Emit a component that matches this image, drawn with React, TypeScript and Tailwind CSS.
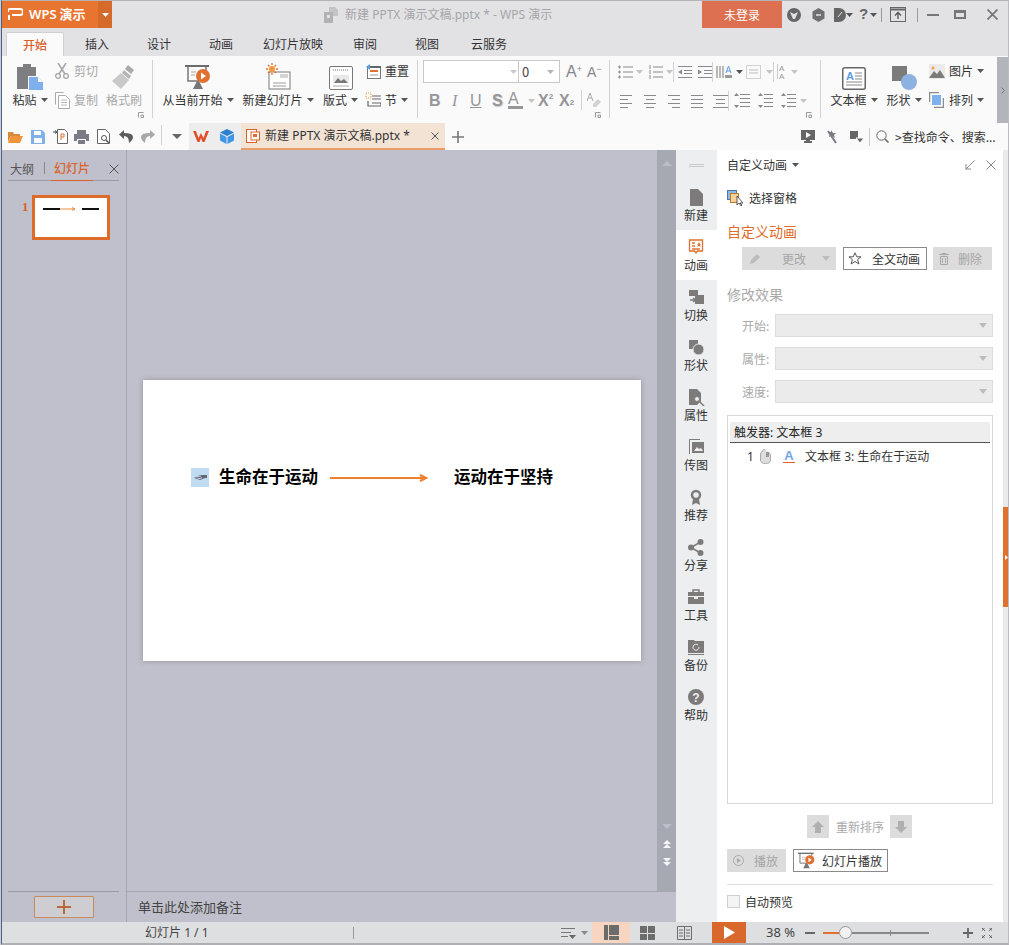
import type { ReactNode } from 'react';

const O = '#e0702f';

// latin runs: the CJK font's own latin is too narrow for this UI
function Lat({ children }: { children: ReactNode }) {
  return <span className="font-['Noto_Sans',sans-serif]">{children}</span>;
}

function Caret({ color = '#555', className = '' }: { color?: string; className?: string }) {
  return (
    <svg width="7" height="4" viewBox="0 0 7 4" className={`shrink-0 ${className}`}>
      <path d="M0 0h7L3.5 4z" fill={color} />
    </svg>
  );
}

function Sep({ h = 58, mt = 3 }: { h?: number; mt?: number }) {
  return <div className="w-px shrink-0 bg-[#d2d2d6]" style={{ height: h, marginTop: mt }} />;
}

function Launcher() {
  return (
    <svg width="6" height="6" viewBox="0 0 6 6" className="absolute bottom-[5px] right-[8px]">
      <path d="M.5 5.5V.5h5M3 3h2.5v2.5H3z" fill="none" stroke="#999" />
    </svg>
  );
}

function Big({ w, ml, label, icon, color = '#333' }: { w: number; ml: number; label: string; icon: ReactNode; color?: string }) {
  return (
    <div className="flex shrink-0 flex-col items-center" style={{ width: w, marginLeft: ml }}>
      <div className="flex h-[33px] items-end">{icon}</div>
      <div className="flex h-[20px] items-center gap-[4px] whitespace-nowrap" style={{ color }}>
        {label}
        {label !== '格式刷' && <Caret />}
      </div>
    </div>
  );
}

function Small({ icon, label, gray, caret, iw = 19, first }: { icon: ReactNode; label: string; gray?: boolean; caret?: boolean; iw?: number; first?: boolean }) {
  return (
    <div className={`flex items-center whitespace-nowrap ${first ? 'h-[28px]' : 'h-[30px]'} ${gray ? 'text-[#a9a9a9]' : 'text-[#333]'}`}>
      <div className="flex shrink-0 items-center" style={{ width: iw }}>{icon}</div>
      {label}
      {caret && <Caret className="ml-[4px]" />}
    </div>
  );
}

// horizontal rule icon used by the paragraph buttons
function Rules({ w = 14, rows, color = '#8a8a8e' }: { w?: number; rows: [number, number][]; color?: string }) {
  const step = 12 / Math.max(rows.length - 1, 1);
  return (
    <svg width={w} height="14" viewBox={`0 0 ${w} 14`} className="shrink-0">
      {rows.map(([a, b], i) => (
        <path key={i} d={`M${a} ${1.5 + i * step}H${b}`} stroke={color} />
      ))}
    </svg>
  );
}

function Bullets({ numbered }: { numbered?: boolean }) {
  return (
    <svg width="15" height="14" viewBox="0 0 15 14" className="shrink-0">
      {[2, 7, 12].map((y) =>
        numbered ? (
          <path key={y} d={`M2 ${y - 2}v4M5 ${y}h10`} stroke="#8a8a8e" />
        ) : (
          <path key={y} d={`M0 ${y}h3M1.5 ${y - 1.5}v3M5 ${y}h10`} stroke="#8a8a8e" />
        ),
      )}
    </svg>
  );
}

function Indent({ out }: { out?: boolean }) {
  return (
    <svg width="14" height="14" viewBox="0 0 14 14" className="shrink-0">
      <path d="M0 1.5h14M6 5.5h8M6 8.5h8M0 12.5h14" stroke="#8a8a8e" />
      <path d={out ? 'M4 4.5v5L0 7z' : 'M0 4.5v5L4 7z'} fill="#8a8a8e" />
    </svg>
  );
}

function Spacing({ w = 16 }: { w?: number }) {
  return (
    <svg width={w} height="15" viewBox={`0 0 ${w} 15`} className="shrink-0">
      <path d={`M6 1.5H${w}M6 5.5H${w}M6 9.5H${w}M6 13.5H${w}`} stroke="#8a8a8e" />
      <path d="M2.5 0L5 3H0zM2.5 15L0 12h5z" fill="#8a8a8e" />
    </svg>
  );
}

function Box({ w, ml = 0, children }: { w: number; ml?: number; children?: ReactNode }) {
  return (
    <div className="flex h-[29px] shrink-0 items-center" style={{ width: w, marginLeft: ml }}>
      {children}
    </div>
  );
}

function PasteIcon() {
  return (
    <svg width="26" height="27" viewBox="0 0 26 27">
      <path d="M0 4h6V1h8v3h5v9H11v13H0z" fill="#7d7d82" />
      <path d="M12 14h9l5 5v8H12z" fill="#7fb0ec" />
      <path d="M21 14l5 5h-5z" fill="#fff" />
    </svg>
  );
}

function SlideshowIcon({ s = 26 }: { s?: number }) {
  return (
    <svg width={s} height={s} viewBox="0 0 26 26">
      <path d="M0 1h24v2H0z" fill="#6b6b6b" />
      <path d="M3 3v14h10M21 3v3" fill="none" stroke="#777" strokeWidth="1.5" />
      <path d="M6 8h5M6 11h4" stroke="#aaa" />
      <path d="M8 25l4-8h2l4 8z" fill="#777" />
      <circle cx="18" cy="12" r="7" fill={O} />
      <path d="M16 8.5l5 3.5-5 3.5z" fill="#fff" />
    </svg>
  );
}

function NewSlideIcon() {
  return (
    <svg width="25" height="27" viewBox="0 0 25 27">
      <rect x="3" y="9" width="21" height="17" fill="#fff" stroke="#777" />
      <path d="M7 20h13M7 23h13" stroke="#9a9a9a" />
      <circle cx="6" cy="6" r="3" fill="#f29a3a" />
      <path d="M6 0v2M6 10v2M0 6h2M10 6h2M2 2l1.5 1.5M8.5 8.5L10 10M10 2L8.5 3.5M2 10l1.5-1.5" stroke={O} strokeWidth="1.3" />
      <path d="M14 12h8M14 14h8" stroke="#aaa" />
    </svg>
  );
}

function Clipboard() {
  return (
    <div className="relative flex w-[150px] shrink-0">
      <Big ml={8} w={40} label="粘贴" icon={<PasteIcon />} />
      <div className="ml-[5px] w-[47px] shrink-0">
        <Small
          first
          gray
          label="剪切"
          icon={
            <svg width="14" height="16" viewBox="0 0 14 16">
              <path d="M3 0l7 11M11 0L4 11" stroke="#a5a5a8" strokeWidth="1.5" />
              <circle cx="3" cy="13" r="2.3" fill="none" stroke="#a5a5a8" strokeWidth="1.3" />
              <circle cx="11" cy="13" r="2.3" fill="none" stroke="#a5a5a8" strokeWidth="1.3" />
            </svg>
          }
        />
        <Small
          gray
          label="复制"
          icon={
            <svg width="15" height="17" viewBox="0 0 15 17">
              <path d="M.5 12.5V.5h8M3.5 3.5h7l4 4v9h-11z" fill="#fff" stroke="#aaa" />
              <path d="M6 8h6M6 10.5h6M6 13h6" stroke="#bbb" />
            </svg>
          }
        />
      </div>
      <Big
        ml={0}
        w={44}
        color="#a9a9a9"
        label="格式刷"
        icon={
          <svg width="24" height="25" viewBox="0 0 24 25">
            <path d="M16 0l6 5-3 4-6-5z" fill="#aaa" />
            <path d="M12 5l7 6-2 3-7-6z" fill="#b5b5b5" />
            <path d="M9 8l8 7-8 9-9-8z" fill="#c9c9c9" />
          </svg>
        }
      />
      <Launcher />
    </div>
  );
}

function SlidesGroup() {
  return (
    <div className="flex w-[264px] shrink-0">
      <Big ml={10} w={70} label="从当前开始" icon={<SlideshowIcon />} />
      <Big ml={10} w={70} label="新建幻灯片" icon={<NewSlideIcon />} />
      <Big
        ml={10}
        w={35}
        label="版式"
        icon={
          <svg width="24" height="24" viewBox="0 0 24 24">
            <rect x=".5" y=".5" width="23" height="23" rx="1.5" fill="#fff" stroke="#777" />
            <path d="M4 4h16" stroke="#bbb" strokeDasharray="1 1" strokeWidth="2" />
            <path d="M4 9h16v8H4z" fill="#e9e9e9" />
            <path d="M5 17l4-5 3 3 3-2 4 4z" fill="#777" />
            <path d="M4 20h16" stroke="#aaa" />
          </svg>
        }
      />
      <div className="ml-[7px] w-[52px] shrink-0">
        <Small
          first
          iw={20}
          label="重置"
          icon={
            <svg width="16" height="15" viewBox="0 0 16 15">
              <rect x="2.5" y="2.5" width="13" height="12" fill="#fff" stroke="#777" />
              <path d="M2 3h14" stroke="#666" strokeWidth="2" />
              <path d="M5 7h8" stroke={O} strokeWidth="2" />
              <path d="M5 11h8" stroke="#999" />
              <path d="M5 0L1 3l4 3z" fill="#5b9de0" />
            </svg>
          }
        />
        <Small
          iw={20}
          label="节"
          caret
          icon={
            <svg width="16" height="16" viewBox="0 0 16 16">
              <path d="M1 1h5v5H1z" fill="none" stroke="#f0a040" strokeDasharray="1 1" />
              <path d="M7 4h9M7 7h9M3 9v5h13v-3H7" fill="none" stroke="#666" strokeWidth="1.2" />
            </svg>
          }
        />
      </div>
    </div>
  );
}

function FontGroup() {
  const letter = "flex h-[29px] shrink-0 items-center font-['Liberation_Sans',sans-serif] text-[16px] text-[#96969a]";
  return (
    <div className="relative w-[191px] shrink-0 pl-[5px]">
      <div className="mt-[3px] flex h-[23px] items-center">
        <div className="flex h-[23px] w-[137px] border border-[#c8c8cc] bg-white">
          <div className="flex w-[95px] items-center justify-end border-r border-[#c8c8cc] pr-[1px]">
            <Caret color="#c9c9c9" />
          </div>
          <div className="flex flex-1 items-center justify-between px-[3px] pr-[5px] text-[13px] text-[#444]">
            0<Caret color="#b5b5b5" />
          </div>
        </div>
        <span className="ml-[6px] font-['Liberation_Sans',sans-serif] text-[16px] leading-none text-[#85858a]">
          A<sup className="text-[9px]">+</sup>
        </span>
        <span className="ml-[5px] font-['Liberation_Sans',sans-serif] text-[14px] leading-none text-[#85858a]">
          A<sup className="text-[9px]">−</sup>
        </span>
      </div>
      <div className="mt-[3px] flex h-[29px]">
        <span className={`${letter} ml-[6px] w-[23px] font-bold`}>B</span>
        <span className={`${letter} w-[18px] font-['Liberation_Serif',serif] italic`}>I</span>
        <span className={`${letter} w-[22px] underline`}>U</span>
        <span className={`${letter} w-[16px] font-bold [text-shadow:1px_1px_1px_#c4c4c4]`}>S</span>
        <div className={`${letter} w-[20px] flex-col items-start justify-center leading-[14px]`}>
          <span>A</span>
          <span className="h-[3px] w-[15px] bg-[#96969a]" />
        </div>
        <Box w={10}>
          <Caret color="#c4c4c4" />
        </Box>
        <span className={`${letter} w-[21px] font-bold`}>
          X<sup className="text-[8px]">2</sup>
        </span>
        <span className={`${letter} w-[22px] font-bold`}>
          X<sub className="text-[8px]">2</sub>
        </span>
        <Sep h={20} mt={4} />
        <Box w={18} ml={5}>
          <svg width="14" height="16" viewBox="0 0 14 16">
            <path d="M3 0L0 8M3 0l3 8M1 5h4" stroke="#aaa" fill="none" />
            <path d="M6 11l5-5 3 3-5 5H6z" fill="#d2d2d2" />
          </svg>
        </Box>
      </div>
      <Launcher />
    </div>
  );
}

function ParagraphGroup() {
  const a: [number, number][] = [[0, 12], [0, 8], [0, 12], [0, 8]];
  const c: [number, number][] = [[0, 12], [2, 10], [0, 12], [2, 10]];
  const r: [number, number][] = [[0, 12], [4, 12], [0, 12], [4, 12]];
  const j: [number, number][] = [[0, 12], [0, 12], [0, 12], [0, 12]];
  return (
    <div className="relative w-[210px] shrink-0">
      <div className="flex h-[29px]">
        <Box w={25} ml={8}><Bullets /><Caret color="#c4c4c4" className="ml-[3px]" /></Box>
        <Box w={25} ml={5}><Bullets numbered /><Caret color="#c4c4c4" className="ml-[3px]" /></Box>
        <Sep h={20} mt={5} />
        <Box w={14} ml={4}><Indent out /></Box>
        <Box w={14} ml={6}><Indent /></Box>
        <Sep h={20} mt={5} />
        <Box w={27} ml={3}>
          <svg width="16" height="16" viewBox="0 0 16 16">
            <path d="M1 2v12M4 2v12M7 2v12" stroke="#777" />
            <path d="M10 9l2.5-7L15 9M11 7h3" fill="none" stroke="#5b9de0" />
            <path d="M9 11h7v3H9z" fill="#999" />
          </svg>
          <Caret className="ml-[4px]" />
        </Box>
        <Box w={27} ml={3}>
          <svg width="15" height="14" viewBox="0 0 15 14">
            <rect x=".5" y=".5" width="14" height="13" fill="none" stroke="#aaa" strokeDasharray="1 1" />
            <path d="M3 5h9M3 8h9" stroke="#bbb" />
          </svg>
          <Caret color="#c4c4c4" className="ml-[5px]" />
        </Box>
        <Sep h={20} mt={5} />
        <Box w={20} ml={3}>
          <svg width="9" height="17" viewBox="0 0 9 17" className="shrink-0">
            <path d="M0 1v15" stroke="#999" />
            <text x="2" y="8" fontSize="8" fontFamily="Liberation Sans" fill="#999">A</text>
            <text x="2" y="16" fontSize="8" fontFamily="Liberation Sans" fill="#999">A</text>
          </svg>
          <Caret color="#c4c4c4" className="ml-[5px]" />
        </Box>
      </div>
      <div className="flex h-[29px]">
        <Box w={12} ml={10}><Rules w={12} rows={a} /></Box>
        <Box w={12} ml={12}><Rules w={12} rows={c} /></Box>
        <Box w={12} ml={12}><Rules w={12} rows={r} /></Box>
        <Box w={12} ml={11}><Rules w={12} rows={j} /></Box>
        <Box w={15} ml={10}><Rules w={15} rows={[[0, 15], [3, 12], [3, 12], [0, 15]]} /></Box>
        <Sep h={20} mt={5} />
        <Box w={16} ml={5}><Spacing /></Box>
        <Box w={15} ml={8}><Spacing w={15} /></Box>
        <Box w={26} ml={8}>
          <Spacing w={15} />
          <Caret color="#c4c4c4" className="ml-[4px]" />
        </Box>
      </div>
      <Launcher />
    </div>
  );
}

function InsertGroup() {
  return (
    <div className="flex w-[176px] shrink-0 overflow-hidden">
      <Big
        ml={10}
        w={46}
        label="文本框"
        icon={
          <svg width="24" height="23" viewBox="0 0 24 23">
            <rect x=".75" y=".75" width="22.5" height="21.5" rx="2" fill="#fff" stroke="#666" strokeWidth="1.5" />
            <text x="4" y="13" fontSize="11" fontWeight="700" fontFamily="Liberation Sans" fill="#5b9de0">A</text>
            <path d="M13 6h7M13 9h7M13 12h7M4 15h16M4 18h16" stroke="#888" />
          </svg>
        }
      />
      <Big
        ml={10}
        w={34}
        label="形状"
        icon={
          <svg width="25" height="24" viewBox="0 0 25 24">
            <path d="M0 0h15v15H0z" fill="#7d7a7a" />
            <circle cx="17" cy="16" r="8" fill="#8db2e2" />
          </svg>
        }
      />
      <div className="ml-[8px] w-[68px] shrink-0">
        <Small
          first
          iw={20}
          label="图片"
          caret
          icon={
            <svg width="16" height="15" viewBox="0 0 16 15">
              <path d="M0 0h16v15H0z" fill="#eceaea" />
              <path d="M0 14l5-7 3 3 3-4 5 8z" fill="#7d7a7a" />
              <circle cx="4" cy="4" r="1.5" fill="#f0a040" />
            </svg>
          }
        />
        <Small
          iw={20}
          label="排列"
          caret
          icon={
            <svg width="15" height="16" viewBox="0 0 15 16">
              <path d="M.5 10V.5H10M5 15.5H14.5V6" fill="none" stroke="#8c8c8c" strokeWidth="1.5" />
              <path d="M3 3h9v10H3z" fill="#7fb0ec" />
            </svg>
          }
        />
      </div>
      <div className="ml-[2px] w-[8px] shrink-0 pt-[7px]">
        <div className="h-[15px] w-[7px] bg-[#c4c4c4]" />
        <div className="mt-[14px] h-[15px] w-[7px] border border-[#999]" />
      </div>
    </div>
  );
}

function Ribbon() {
  return (
    <div className="flex h-[67px] bg-[#fafafa] pt-[1px]">
      <Clipboard />
      <Sep />
      <SlidesGroup />
      <Sep />
      <FontGroup />
      <Sep />
      <ParagraphGroup />
      <Sep />
      <InsertGroup />
      <div className="flex flex-1 items-center justify-center bg-[#b3b5bd]">
        <svg width="4" height="7" viewBox="0 0 4 7"><path d="M.5.5l3 3-3 3" fill="none" stroke="#777" /></svg>
      </div>
    </div>
  );
}

function TitleBar() {
  return (
    <div className="flex h-[27px] bg-[#e2e2e5]">
      <div className="flex w-[110px] shrink-0 text-white">
        <div className="flex flex-1 items-center gap-[6px] bg-[#e8752f] pl-[6px] text-[13px] font-semibold">
          <svg width="15" height="13" viewBox="0 0 15 13">
            <path d="M0 4V2.5Q0 1 2 1h10q3 0 3 3t-3 3H4M1 12V7" fill="none" stroke="#fff" strokeWidth="2" />
          </svg>
          <span><Lat>WPS</Lat> 演示</span>
        </div>
        <div className="flex w-[14px] items-center justify-center bg-[#d66a2b]">
          <Caret color="#fff" />
        </div>
      </div>
      <div className="ml-[212px] flex w-[239px] items-center gap-[6px] whitespace-nowrap text-[#a5a5a8]">
        <svg width="14" height="16" viewBox="0 0 14 16" className="mr-[1px] shrink-0">
          <path d="M5 0h6l3 3v6H5z" fill="#c4c4c8" />
          <path d="M0 5h9v11H0z" fill="#b2b2b6" />
          <path d="M3 8h3v3H3z" fill="#e2e2e5" />
        </svg>
        <span>新建<Lat> PPTX </Lat>演示文稿<Lat>.pptx * - WPS </Lat>演示</span>
      </div>
      <div className="ml-[139px] flex w-[80px] shrink-0 items-center justify-center bg-[#dd7050] text-white">未登录</div>
      <div className="ml-[5px] flex items-center">
        <svg width="14" height="14" viewBox="0 0 14 14">
          <circle cx="7" cy="7" r="7" fill="#666" />
          <path d="M3 4l4 2 4-2-3 7H6z" fill="#e2e2e5" />
        </svg>
        <svg width="13" height="14" viewBox="0 0 13 14" className="ml-[11px]">
          <path d="M6.5 0l6 3.5v7L6.5 14l-6-3.5v-7z" fill="#707074" />
          <path d="M4 7h5" stroke="#e2e2e5" strokeWidth="1.5" />
        </svg>
        <svg width="12" height="14" viewBox="0 0 12 14" className="ml-[9px]">
          <path d="M0 0h5a7 7 0 0 1 0 14H0z" fill="#666" />
          <path d="M4 9l4-5" stroke="#e2e2e5" />
        </svg>
        <Caret />
        <span className="ml-[6px] w-[8px] font-['Liberation_Sans',sans-serif] text-[15px] font-bold text-[#666]">?</span>
        <Caret className="ml-[3px]" />
        <div className="ml-[4px] h-[14px] w-px bg-[#999]" />
        <svg width="16" height="15" viewBox="0 0 16 15" className="ml-[8px]">
          <rect x=".5" y=".5" width="15" height="14" fill="none" stroke="#666" />
          <path d="M0 2.5h16" stroke="#666" strokeWidth="2" />
          <path d="M8 12V6M5 8.5L8 5.5l3 3" fill="none" stroke="#555" strokeWidth="1.3" />
        </svg>
        <div className="ml-[11px] h-[14px] w-px bg-[#999]" />
        <div className="ml-[9px] h-[2px] w-[12px] bg-[#777]" />
        <div className="ml-[15px] h-[9px] w-[12px] border-2 border-t-[3px] border-[#777]" />
        <svg width="11" height="11" viewBox="0 0 11 11" className="ml-[21px]">
          <path d="M.5.5l10 10M10.5.5l-10 10" stroke="#777" strokeWidth="1.8" />
        </svg>
      </div>
    </div>
  );
}

function TabBar() {
  const tabs: [string, number][] = [
    ['插入', 62],
    ['设计', 62],
    ['动画', 62],
    ['幻灯片放映', 82],
    ['审阅', 62],
    ['视图', 62],
    ['云服务', 62],
  ];
  return (
    <div className="flex h-[28px] items-end bg-[#e2e2e5] pl-[4px]">
      <div className="flex h-[24px] w-[58px] items-center justify-center rounded-t-[2px] border border-b-0 border-[#d0d0d4] bg-[#fafafa] font-medium text-[#d9622a]">
        开始
      </div>
      <div className="ml-[2px] flex h-[24px]">
        {tabs.map(([t, w]) => (
          <div key={t} className="flex items-center justify-center text-[#333]" style={{ width: w }}>
            {t}
          </div>
        ))}
      </div>
    </div>
  );
}

function QuickBar() {
  return (
    <div className="flex h-[27px] items-stretch bg-[#fafafa]">
      <div className="flex w-[159px] shrink-0 items-center pl-[6px]">
        <svg width="15" height="12" viewBox="0 0 15 12">
          <path d="M0 1h5l1 2h6v2H3L0 11z" fill="#d88a3c" />
          <path d="M3 5h12l-3 7H0z" fill="#f0943c" />
        </svg>
        <svg width="14" height="14" viewBox="0 0 14 14" className="ml-[8px]">
          <path d="M0 0h11l3 3v11H0z" fill="#7fb0ec" />
          <path d="M3 1h7v4H3zM3 8h8v5H3z" fill="#fff" />
        </svg>
        <svg width="15" height="15" viewBox="0 0 15 15" className="ml-[8px]">
          <path d="M4.5.5h7l3 3v11h-10z" fill="#fff" stroke="#666" />
          <path d="M0 3h3M2 1.5L4 3 2 4.5" fill="none" stroke="#444" />
          <path d="M8 11V5h3v3H8" fill="none" stroke={O} />
        </svg>
        <svg width="15" height="14" viewBox="0 0 15 14" className="ml-[6px]">
          <path d="M3 0h9v4H3zM0 4h15v7H12V9H3v2H0zM4 10h7v4H4z" fill="#7b7b85" />
        </svg>
        <svg width="14" height="15" viewBox="0 0 14 15" className="ml-[8px]">
          <path d="M.5.5h8l4 4v10H.5z" fill="#fff" stroke="#666" />
          <circle cx="7" cy="9" r="2.5" fill="none" stroke="#555" />
          <path d="M9 11l3 3" stroke="#555" strokeWidth="1.5" />
        </svg>
        <svg width="14" height="13" viewBox="0 0 14 13" className="ml-[8px]">
          <path d="M5 0L0 4.5 5 9V6q5 0 5 7 4-3 4-6 0-4-9-4z" fill="#5d5d5d" />
        </svg>
        <svg width="14" height="13" viewBox="0 0 14 13" className="ml-[8px]">
          <path d="M9 0l5 4.5L9 9V6q-5 0-5 7-4-3-4-6 0-4 9-4z" fill="#a8a8a8" />
        </svg>
      </div>
      <Sep h={20} mt={2} />
      <div className="flex w-[27px] items-center justify-end pr-[7px]">
        <svg width="10" height="5" viewBox="0 0 10 5"><path d="M0 0h10L5 5z" fill="#666" /></svg>
      </div>
      <div className="flex w-[52px] items-center bg-[#ededee] pl-[4px]">
        <svg width="16" height="13" viewBox="0 0 16 13">
          <path d="M0 1h3l2.5 7L8 3l2.5 5L13 1h3l-4.500 11h-2L8 8l-1.500 4h-2z" fill="#e2502a" />
        </svg>
        <svg width="14" height="15" viewBox="0 0 14 15" className="ml-[11px]">
          <path d="M7 0l7 3.5L7 7 0 3.5z" fill="#2d7fd0" />
          <path d="M0 4.5l6.5 3.5v7L0 11.5zM14 4.5L7.5 8v7l6.5-3.5z" fill="#3f97e6" />
        </svg>
      </div>
      <div className="flex w-[204px] items-center border-b-2 border-[#eb9c6a] bg-[#f2e3d5] pl-[5px] whitespace-nowrap text-[#333]">
        <svg width="14" height="14" viewBox="0 0 14 14">
          <rect x=".5" y=".5" width="10" height="13" fill="#fff" stroke="#d9622a" />
          <rect x="5" y="3" width="8.5" height="8" fill="#fff" stroke="#d9622a" />
          <path d="M7 5h4v3H7z" fill={O} />
        </svg>
        <span className="ml-[5px] w-[166px]">新建<Lat> PPTX </Lat>演示文稿<Lat>.pptx *</Lat></span>
        <svg width="8" height="8" viewBox="0 0 8 8"><path d="M.5.5l7 7M7.5.5l-7 7" stroke="#555" /></svg>
      </div>
      <div className="ml-[7px] flex items-center">
        <svg width="12" height="12" viewBox="0 0 12 12"><path d="M6 0v12M0 6h12" stroke="#777" strokeWidth="1.6" /></svg>
      </div>
      <div className="ml-[337px] flex items-center">
        <svg width="14" height="13" viewBox="0 0 14 13">
          <path d="M0 0h14v10H9v1h2v2H3v-2h2v-1H0z" fill="#666" />
          <path d="M5 2l5 3-5 3z" fill="#fafafa" />
        </svg>
        <svg width="12" height="14" viewBox="0 0 12 14" className="ml-[11px]">
          <path d="M2 1l8 12" stroke="#7b7b85" strokeWidth="2" />
          <path d="M5 0l2 3 3 0-2 2 1 3-3-2-3 1 1-3-2-2h3z" fill="#7b7b85" />
        </svg>
        <svg width="14" height="12" viewBox="0 0 14 12" className="ml-[12px]">
          <path d="M0 0h8v8H0z" fill="#666" />
          <path d="M6 7h8l-4 5z" fill="#666" stroke="#fafafa" />
        </svg>
        <div className="ml-[5px] h-[18px] w-px bg-[#ccc]" />
        <svg width="13" height="13" viewBox="0 0 13 13" className="ml-[6px]">
          <circle cx="5.5" cy="5.5" r="4.7" fill="none" stroke="#666" />
          <path d="M9 9l3.5 3.5" stroke="#666" strokeWidth="1.5" />
        </svg>
        <span className="ml-[6px] whitespace-nowrap text-[#333]">&gt;查找命令、搜索...</span>
      </div>
    </div>
  );
}

function LeftPanel() {
  const tab = 'flex h-[31px] items-center pt-[6px]';
  return (
    <div className="flex w-[125px] shrink-0 flex-col border-r border-[#a5a6b0] bg-[#c0c0cc]">
      <div className="pr-[7px] pl-[6px]">
        <div className="flex h-[31px] items-stretch border-b border-[#9a9aa4] text-[#555]">
          <span className={`${tab} ml-[2px] -mb-px`}>大纲</span>
          <span className="mt-[12px] ml-[10px] h-[12px] w-px bg-[#888]" />
          <span className={`${tab} -mb-px ml-[6px] border-b border-[#d9622a] px-[3px] font-medium text-[#d9622a]`}>
            幻灯片
          </span>
          <svg width="10" height="10" viewBox="0 0 10 10" className="mt-[14px] ml-[16px]">
            <path d="M.5.5l9 9M9.5.5l-9 9" stroke="#555" />
          </svg>
        </div>
      </div>
      <div className="flex pt-[14px] pl-[20px]">
        <span className="w-[10px] font-['Liberation_Serif',serif] text-[13px] font-bold leading-[24px] text-[#d9622a]">1</span>
        <div className="flex h-[45px] w-[78px] items-start justify-center border-[3px] border-[#dd6b2a] bg-white pt-[9px]">
          <svg width="56" height="4" viewBox="0 0 56 4">
            <path d="M0 2h17M39 2h17" stroke="#111" strokeWidth="2" />
            <path d="M17 2h15M29 .5L32 2l-3 1.5" fill="none" stroke="#ef8a3c" />
          </svg>
        </div>
      </div>
      <div className="mt-auto pr-[7px] pl-[6px]">
        <div className="flex h-[31px] items-start justify-center border-t border-[#9a9aa4] pt-[4px]">
          <div className="flex h-[22px] w-[60px] items-center justify-center rounded-[1px] border border-[#c98a5c] bg-[#cdcdd2]">
            <svg width="14" height="14" viewBox="0 0 14 14"><path d="M7 0v14M0 7h14" stroke="#b9683a" strokeWidth="2" /></svg>
          </div>
        </div>
      </div>
    </div>
  );
}

function Slide() {
  return (
    <div className="h-[281px] w-[498px] bg-white pt-[87px] pl-[48px] shadow-[0_0_5px_rgba(90,90,100,0.45)]">
      <div className="flex h-[20px] items-center text-[16.5px] font-bold text-black">
        <svg width="18" height="19" viewBox="0 0 18 19" className="shrink-0">
          <path d="M0 0h18v19H0z" fill="#bfdcf2" />
          <path d="M3 10l6-3 5 0v3l-5 2zM14 7h2v3h-2z" fill="#667" />
          <path d="M5 9l5-1M6 11l5-1" stroke="#bfdcf2" />
        </svg>
        <span className="-mt-[2px] ml-[10px] w-[111px] whitespace-nowrap">生命在于运动</span>
        <svg width="98" height="8" viewBox="0 0 98 8" className="mt-[2px] shrink-0">
          <path d="M0 4h96M90 1l6 3-6 3" fill="none" stroke="#ef7f2d" strokeWidth="2.2" />
        </svg>
        <span className="-mt-[2px] ml-[26px] whitespace-nowrap">运动在于坚持</span>
      </div>
    </div>
  );
}

function EditorScroll() {
  return (
    <div className="flex w-[19px] shrink-0 flex-col items-center bg-[#a6a8b2] pt-[11px]">
      <svg width="10" height="5" viewBox="0 0 10 5"><path d="M5 0l5 5H0z" fill="#bcbec6" /></svg>
      <svg width="10" height="5" viewBox="0 0 10 5" className="mt-auto"><path d="M0 0h10L5 5z" fill="#bcbec6" /></svg>
      <svg width="8" height="9" viewBox="0 0 8 9" className="mt-[11px]"><path d="M4 0l4 4H0zM4 4l4 4H0z" fill="#f4f4f6" /></svg>
      <svg width="8" height="9" viewBox="0 0 8 9" className="mt-[9px] mb-[24px]"><path d="M0 0h8L4 4zM0 4h8L4 8z" fill="#f4f4f6" /></svg>
    </div>
  );
}

const sideIcons: Record<string, ReactNode> = {
  新建: <path d="M2 0h8l5 5v12H2z" />,
  动画: (
    <g fill="none" stroke={O} strokeWidth="1.3">
      <path d="M1.5 1h13v11h-5l-1.5 2-1.5-2h-5z" />
      <path d="M4 4h3M4 7h3M4 10h8" />
      <path d="M11 3l1 2h1l-1 1 .5 2-1.5-1-1.5 1 .5-2-1-1h1z" fill={O} stroke="none" />
    </g>
  ),
  切换: (
    <g>
      <path d="M1 1h9v6H1zM7 6h9v9H7z" />
      <path d="M2 11h6M5 9l3 2-3 2" fill="none" stroke="#7d7a7a" strokeWidth="1.3" />
    </g>
  ),
  形状: (
    <g>
      <path d="M1 1h9v9H1z" />
      <circle cx="10.5" cy="10.5" r="5.5" stroke="#eceef0" />
    </g>
  ),
  属性: (
    <g>
      <path d="M1 0h8l4 4v8l-4 4H1z" />
      <circle cx="9" cy="10" r="2.5" fill="#eceef0" stroke="#7d7a7a" />
      <path d="M11 12l5 5" stroke="#7d7a7a" strokeWidth="1.5" />
    </g>
  ),
  传图: (
    <g>
      <path d="M1.5 15V.5H12" fill="none" stroke="#7d7a7a" />
      <path d="M4 3h12v11H4z" />
      <path d="M6 12l3-4 2 2 2-1 2 3z" fill="#eceef0" />
    </g>
  ),
  推荐: (
    <g>
      <circle cx="8" cy="6" r="4" fill="none" stroke="#7d7a7a" strokeWidth="2.5" />
      <path d="M5 10l-1 6 4-2 4 2-1-6z" />
    </g>
  ),
  分享: (
    <g>
      <circle cx="12.5" cy="3" r="3" />
      <circle cx="3" cy="8.5" r="3" />
      <circle cx="12.5" cy="14" r="3" />
      <path d="M12.5 3L3 8.5l9.5 5.5" fill="none" stroke="#7d7a7a" strokeWidth="1.5" />
    </g>
  ),
  工具: (
    <g>
      <path d="M5 3V1h6v2" fill="none" stroke="#7d7a7a" strokeWidth="1.5" />
      <path d="M0 3h16v4H0zM0 8h6v2h4V8h6v7H0z" />
    </g>
  ),
  备份: (
    <g>
      <path d="M0 1h6l1 1h9v12H0zM0 15h16v1H0z" />
      <path d="M11 8a3 3 0 1 1-1-2" fill="none" stroke="#eceef0" />
    </g>
  ),
  帮助: (
    <g>
      <circle cx="8" cy="8" r="8" />
      <text x="8" y="12.5" fontSize="12" fontWeight="700" fontFamily="Liberation Sans" textAnchor="middle" fill="#eceef0">?</text>
    </g>
  ),
};

function SideTabs() {
  return (
    <div className="w-[41px] shrink-0 bg-[#eceef0] text-[#333]">
      <div className="flex h-[30px] flex-col items-center justify-center gap-[1px]">
        <div className="h-px w-[15px] bg-[#c8c8cc]" />
        <div className="h-px w-[15px] bg-[#c8c8cc]" />
      </div>
      {Object.keys(sideIcons).map((name) => (
        <div
          key={name}
          className={`flex h-[50px] flex-col items-center pt-[9px] pr-[1px] ${name === '动画' ? 'bg-white' : ''}`}
        >
          <svg width="17" height="17" viewBox="0 0 17 17" fill="#7d7a7a">
            {sideIcons[name]}
          </svg>
          <span className="leading-[18px]">{name}</span>
        </div>
      ))}
    </div>
  );
}

function DisabledSelect({ label }: { label: string }) {
  return (
    <div className="mb-[10px] ml-[15px] flex h-[23px] items-center">
      <span className="w-[33px] shrink-0 text-[#a9a9a9]">{label}:</span>
      <div className="flex h-[23px] w-[218px] items-center justify-end border border-[#dcdcdc] bg-[#ebebeb] pr-[5px]">
        <svg width="8" height="5" viewBox="0 0 8 5"><path d="M0 0h8L4 5z" fill="#bcbcbc" /></svg>
      </div>
    </div>
  );
}

function TaskPane() {
  return (
    <div className="w-[286px] shrink-0 bg-white pl-[10px] text-[#333]">
      <div className="flex h-[30px] items-center pr-[7px]">
        <span>自定义动画</span>
        <Caret className="ml-[5px]" />
        <svg width="10" height="10" viewBox="0 0 10 10" className="ml-auto">
          <path d="M9.5.5l-9 9M1 4v5h5" fill="none" stroke="#888" />
        </svg>
        <svg width="10" height="10" viewBox="0 0 10 10" className="ml-[11px]">
          <path d="M.5.5l9 9M9.5.5l-9 9" stroke="#888" />
        </svg>
      </div>
      <div className="mt-[8px] flex h-[20px] items-center">
        <svg width="16" height="16" viewBox="0 0 16 16">
          <rect x=".5" y=".5" width="9" height="9" fill="#8fb7e6" stroke="#4a76a8" />
          <rect x="3.5" y="3.5" width="8" height="9" fill="#f4d29a" stroke="#c07a30" />
          <path d="M10 6v9l2-2 2 3 1-1-2-2h3z" fill="#fff" stroke="#333" strokeWidth=".8" />
        </svg>
        <span className="ml-[6px]">选择窗格</span>
      </div>
      <div className="mt-[13px] h-[20px] text-[14px] leading-[20px] text-[#dd6b2a]">自定义动画</div>
      <div className="mt-[6px] ml-[15px] flex h-[23px]">
        <div className="flex w-[94px] items-center bg-[#dcdcdc] pr-[6px] pl-[7px] text-[#a5a5a5]">
          <svg width="13" height="13" viewBox="0 0 13 13"><path d="M1 12l1-4 6-6 3 3-6 6z" fill="#bcbcbc" /></svg>
          <span className="ml-[20px]">更改</span>
          <svg width="8" height="5" viewBox="0 0 8 5" className="ml-auto"><path d="M0 0h8L4 5z" fill="#bcbcbc" /></svg>
        </div>
        <div className="ml-[7px] flex w-[84px] items-center border border-[#8a8a8a] pl-[4px]">
          <svg width="14" height="13" viewBox="0 0 14 13">
            <path d="M7 .8l1.8 4h4.2l-3.4 2.8 1.3 4.4L7 9.5 3.1 12l1.3-4.400L1 4.800h4.200z" fill="none" stroke="#555" />
          </svg>
          <span className="ml-[10px]">全文动画</span>
        </div>
        <div className="ml-[6px] flex w-[59px] items-center bg-[#dcdcdc] pl-[6px] text-[#a5a5a5]">
          <svg width="10" height="12" viewBox="0 0 10 12">
            <path d="M0 1.5h10M3 1.5V.5h4v1M1.5 3.5h7V11.5h-7zM3.5 5v5M6.5 5v5" fill="none" stroke="#a8a8a8" />
          </svg>
          <span className="ml-[9px]">删除</span>
        </div>
      </div>
      <div className="mt-[14px] mb-[10px] h-[20px] text-[14px] leading-[20px] text-[#a9a9a9]">修改效果</div>
      <DisabledSelect label="开始" />
      <DisabledSelect label="属性" />
      <DisabledSelect label="速度" />
      <div className="mt-[12px] h-[389px] w-[266px] border border-[#d8d8d8] px-[2px] pt-[6px]">
        <div className="flex h-[21px] items-center rounded-t-[2px] border-b border-[#555] bg-[#eeeeee] pl-[4px] text-[#222]">
          <span>触发器<Lat>: </Lat>文本框<Lat> 3</Lat></span>
        </div>
        <div className="mt-[4px] flex h-[18px] items-center pl-[17px]">
          <span className="w-[13px]"><Lat>1</Lat></span>
          <svg width="11" height="15" viewBox="0 0 11 15">
            <path d="M5.5 0C2 0 3 3 .5 4v7q0 3.5 5 3.5t5-3.500V7Q10.500 3 7 3" fill="#ddd" stroke="#aaa" />
            <path d="M6 3h3v5H6z" fill="#999" />
          </svg>
          <span className="ml-[12px] flex w-[12px] flex-col items-center border-b border-[#e0602a] font-['Liberation_Sans',sans-serif] text-[13px] font-bold leading-[13px] text-[#6fa5e2]">
            A
          </span>
          <span className="ml-[10px] whitespace-nowrap">文本框<Lat> 3: </Lat>生命在于运动</span>
        </div>
      </div>
      <div className="mt-[11px] flex h-[23px] items-center pl-[80px]">
        <div className="flex h-[23px] w-[22px] items-center justify-center bg-[#dcdcdc]">
          <svg width="12" height="12" viewBox="0 0 12 12"><path d="M6 0l6 6H9v6H3V6H0z" fill="#b0b0b0" /></svg>
        </div>
        <span className="ml-[7px] w-[54px] text-[#a9a9a9]">重新排序</span>
        <div className="flex h-[23px] w-[22px] items-center justify-center bg-[#dcdcdc]">
          <svg width="12" height="12" viewBox="0 0 12 12"><path d="M6 12L0 6h3V0h6v6h3z" fill="#b0b0b0" /></svg>
        </div>
      </div>
      <div className="mt-[11px] flex h-[23px]">
        <div className="flex w-[59px] items-center bg-[#dcdcdc] pl-[6px] text-[#a5a5a5]">
          <svg width="11" height="11" viewBox="0 0 11 11">
            <circle cx="5.5" cy="5.5" r="5" fill="none" stroke="#a8a8a8" />
            <path d="M4 3l4 2.5L4 8z" fill="#a8a8a8" />
          </svg>
          <span className="ml-[10px]">播放</span>
        </div>
        <div className="ml-[7px] flex w-[95px] items-center border border-[#8a8a8a] pl-[4px]">
          <SlideshowIcon s={17} />
          <span className="ml-[7px] whitespace-nowrap">幻灯片播放</span>
        </div>
      </div>
      <div className="mt-[12px] h-px w-[266px] bg-[#dcdcdc]" />
      <div className="mt-[10px] flex h-[13px] items-center">
        <div className="h-[13px] w-[13px] border border-[#cfcfcf] bg-[#f3f4f6]" />
        <span className="ml-[5px]">自动预览</span>
      </div>
    </div>
  );
}

function StatusBar() {
  return (
    <div className="flex h-[21px] items-center bg-[#dedfe1] text-[#444]">
      <span className="ml-[143px] w-[208px] whitespace-nowrap">幻灯片<Lat> 1 / 1</Lat></span>
      <div className="h-[12px] w-px bg-[#999]" />
      <div className="ml-[207px] flex w-[31px] items-center">
        <svg width="15" height="12" viewBox="0 0 15 12" className="shrink-0">
          <path d="M0 1.5h14M0 5.5h10M0 9.5h7" stroke="#777" />
          <path d="M8 8h7l-3.5 4z" fill="#666" />
        </svg>
        <Caret className="ml-[5px]" color="#888" />
      </div>
      <div className="flex h-[21px] w-[38px] items-center justify-center bg-[#f8d5c0]">
        <svg width="15" height="15" viewBox="0 0 15 15"><path d="M0 0h4v15H0zM5 0h10v10H5zM5 11h10v4H5z" fill="#6c6c6c" /></svg>
      </div>
      <svg width="15" height="14" viewBox="0 0 15 14" className="ml-[10px]">
        <path d="M0 0h7v7H0zM8 0h7v7H8zM0 8h7v6H0zM8 8h7v6H8z" fill="#6c6c6c" />
      </svg>
      <svg width="15" height="14" viewBox="0 0 15 14" className="ml-[22px]">
        <path d="M.5.5h14v13H.5zM7.5.5v13M2 4h4M2 7h4M2 10h4M9 4h4M9 7h4M9 10h4" fill="none" stroke="#6c6c6c" />
      </svg>
      <div className="ml-[20px] flex h-[21px] w-[34px] items-center justify-center bg-[#d9682c]">
        <svg width="11" height="13" viewBox="0 0 11 13"><path d="M0 0l11 6.5L0 13z" fill="#fff" /></svg>
      </div>
      <span className="ml-[20px] w-[39px] whitespace-nowrap text-[13px]"><Lat>38 %</Lat></span>
      <div className="h-[2px] w-[10px] bg-[#666]" />
      <div className="ml-[8px] flex w-[106px] items-center">
        <div className="h-[2px] w-[16px] bg-[#e0702f]" />
        <div className="h-[13px] w-[13px] shrink-0 rounded-full border border-[#999] bg-[#f2f2f2]" />
        <div className="flex h-[2px] flex-1 items-center justify-center bg-[#888]">
          <div className="h-[6px] w-px bg-[#888]" />
        </div>
      </div>
      <svg width="10" height="10" viewBox="0 0 10 10" className="ml-[34px]"><path d="M5 0v10M0 5h10" stroke="#666" strokeWidth="1.8" /></svg>
      <svg width="10" height="10" viewBox="0 0 10 10" className="ml-[9px]">
        <path d="M0 3V0h3M7 0h3v3M10 7v3H7M3 10H0V7M0 0l3 3M10 0L7 3M10 10L7 7M0 10l3-3" fill="none" stroke="#666" />
      </svg>
    </div>
  );
}

export default function App() {
  return (
    <div className="h-[945px] w-[1009px] overflow-hidden border-l border-l-[#cfcfd3] bg-white font-['Noto_Sans_CJK_SC','Liberation_Sans',sans-serif] text-[12px]">
      <div className="flex h-full flex-col border-t border-r border-b-2 border-l border-t-[#b5b5b8] border-r-[#bcbcc0] border-b-[#b0b0b4] border-l-[#44618a]">
        <TitleBar />
        <TabBar />
        <Ribbon />
        <QuickBar />
        <div className="flex h-[772px]">
          <LeftPanel />
          <div className="flex w-[549px] shrink-0 flex-col">
            <div className="flex h-[741px]">
              <div className="flex flex-1 items-center justify-center bg-[#c0c0cc]">
                <Slide />
              </div>
              <EditorScroll />
            </div>
            <div className="flex h-[31px] items-center border-t border-[#a5a6b0] bg-[#c0c0cc] pl-[11px] text-[13px] text-[#444]">
              单击此处添加备注
            </div>
          </div>
          <SideTabs />
          <TaskPane />
          <div className="relative flex-1 bg-[#eaeaec]">
            <div className="absolute top-[357px] left-0 flex h-[100px] w-[5px] items-center justify-end bg-[#e0702f]">
              <svg width="3" height="5" viewBox="0 0 3 5"><path d="M0 0l3 2.5L0 5z" fill="#fff" /></svg>
            </div>
          </div>
        </div>
        <StatusBar />
      </div>
    </div>
  );
}
